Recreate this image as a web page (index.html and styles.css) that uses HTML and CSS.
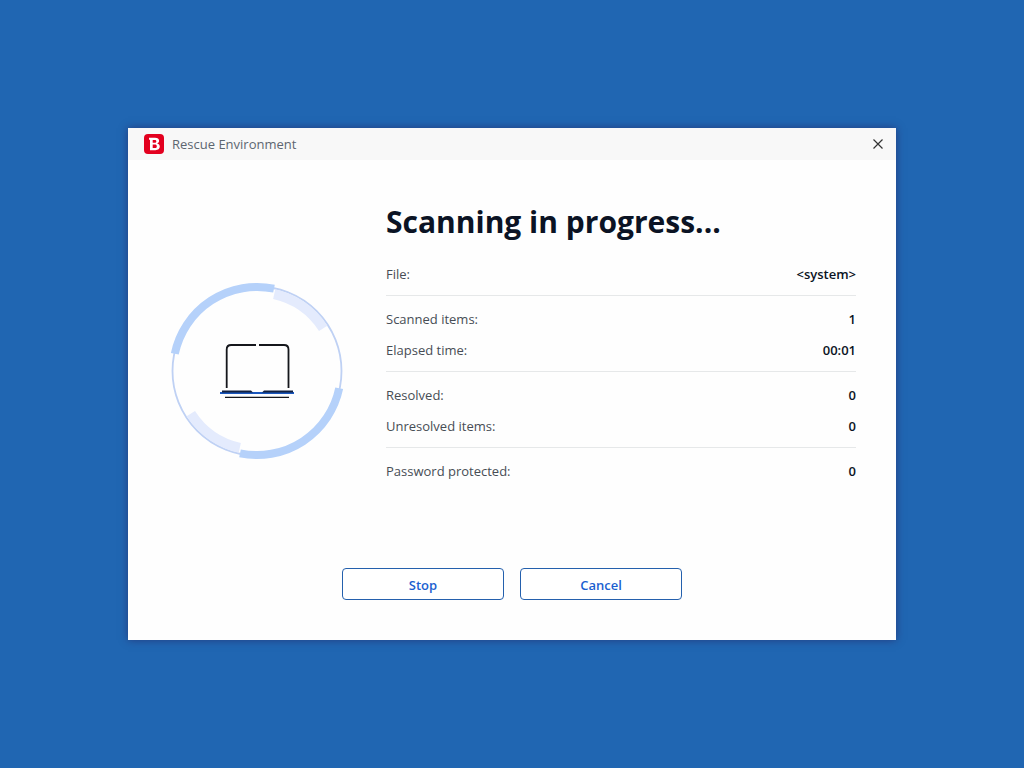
FILE: index.html
```html
<!DOCTYPE html>
<html lang="en">
<head>
<meta charset="utf-8">
<meta name="viewport" content="width=device-width, initial-scale=1">
<title>Rescue Environment</title>
<link rel="stylesheet" href="styles.css">
</head>
<body>
<main class="window">
  <header class="titlebar">
    <svg class="logo" viewBox="0 0 20 20" aria-hidden="true">
      <rect width="20" height="20" rx="4" fill="#e3001f"/>
      <path fill="#fff" fill-rule="evenodd" d="M5 3.800h6c2.600 0 4.100 1.100 4.100 3 0 1.400-.8 2.300-2 2.700 1.700.4 2.700 1.500 2.700 3.100 0 2.300-1.700 3.600-4.400 3.600H6V5.800H5zM8.700 5.900v2.900h1.900c1.100 0 1.700-.5 1.700-1.500 0-.9-.6-1.400-1.700-1.400zM8.700 10.600v3.500h2.100c1.300 0 2-.6 2-1.700 0-1.200-.7-1.800-2-1.800z"/>
    </svg>
    <span class="title">Rescue Environment</span>
    <button class="close" type="button" aria-label="Close">
      <svg viewBox="0 0 10 10" aria-hidden="true"><path d="M.5 .5l9 9M9.500 .5l-9 9" fill="none" stroke="#333" stroke-width="1.200"/></svg>
    </button>
  </header>
  <section class="content">
    <svg class="progress" viewBox="0 0 180 180" aria-hidden="true">
      <circle cx="90" cy="90" r="84.500" fill="none" stroke="#bfd1f4" stroke-width="1.800"/>
      <g fill="none">
        <path stroke="#b5d1fa" stroke-width="8" d="M7.800 72.700A84 84 0 0 1 107 7.700M172.200 107.300A84 84 0 0 1 73 172.300"/>
        <path stroke="#e4ebfd" stroke-width="10" d="M107.200 13.200A78.700 78.700 0 0 1 156.200 47.400M72.800 166.800A78.700 78.700 0 0 1 23.800 132.600"/>
      </g>
      <g fill="none" stroke="#15171c">
        <path stroke-width="1.800" d="M59.700 107V68.500Q59.700 64 64.200 64H89M92 64h25q4.500 0 4.500 4.500V107"/>
        <path stroke-width="1.200" d="M58 116.400h64"/>
      </g>
      <path fill="#1a57bd" d="M53 111h74v2H53z"/>
      <path fill="#12203f" d="M55 109.500h29l2 2H55zM97 109.500h29v2H95z"/>
    </svg>
    <div class="details">
      <h1>Scanning in progress...</h1>
      <dl class="group">
        <div class="row"><dt>File:</dt><dd>&lt;system&gt;</dd></div>
      </dl>
      <dl class="group">
        <div class="row"><dt>Scanned items:</dt><dd>1</dd></div>
        <div class="row"><dt>Elapsed time:</dt><dd>00:01</dd></div>
      </dl>
      <dl class="group">
        <div class="row"><dt>Resolved:</dt><dd>0</dd></div>
        <div class="row"><dt>Unresolved items:</dt><dd>0</dd></div>
      </dl>
      <dl class="group">
        <div class="row"><dt>Password protected:</dt><dd>0</dd></div>
      </dl>
    </div>
  </section>
  <footer class="actions">
    <button class="button" type="button">Stop</button>
    <button class="button" type="button">Cancel</button>
  </footer>
</main>
</body>
</html>
```
FILE: styles.css
```css
* {
  box-sizing: border-box;
}

body {
  margin: 0;
  min-height: 100vh;
  display: grid;
  place-items: center;
  background: #2066b2;
  color: #0b1324;
  font: 13px/20px "Segoe UI", "Open Sans", "Noto Sans", sans-serif;
}

.window {
  width: 75%;
  min-width: 640px;
  background: #fefefe;
  box-shadow: 0 0 8px rgba(40, 30, 90, 0.6);
}

.titlebar {
  display: flex;
  align-items: center;
  gap: 8px;
  height: 32px;
  padding: 0 8px 0 16px;
  background: #f8f8f8;
}

.logo {
  width: 20px;
  height: 20px;
}

.title {
  flex: 1;
  color: #5d6670;
}

.close {
  display: grid;
  place-items: center;
  width: 20px;
  height: 20px;
  padding: 0;
  border: 0;
  background: none;
}

.close svg {
  width: 10px;
  height: 10px;
}

.content {
  display: grid;
  grid-template-columns: 180px 1fr;
  gap: 39px;
  padding: 40px 40px 0 39px;
}

.progress {
  width: 180px;
  height: 180px;
  margin-top: 81px;
}

h1 {
  margin: 0 0 15px;
  font-size: 30px;
  line-height: 44px;
  font-weight: 700;
}

.group {
  margin: 0;
  padding: 8px 0 5px;
  border-top: 1px solid #e6e8e9;
}

h1 + .group {
  padding-top: 0;
  border-top: 0;
}

.row {
  display: flex;
  align-items: center;
  justify-content: space-between;
  height: 31px;
  padding-bottom: 2px;
}

dt {
  color: #474d55;
}

dd {
  margin: 0;
  font-weight: 600;
}

.actions {
  display: flex;
  justify-content: center;
  gap: 16px;
  padding: 76px 40px 40px;
}

.button {
  width: 162px;
  height: 32px;
  padding: 2px 0 0;
  border: 1px solid #2460ad;
  border-radius: 4px;
  background: #fff;
  color: #1b5fd0;
  font: inherit;
  font-weight: 600;
}
```
